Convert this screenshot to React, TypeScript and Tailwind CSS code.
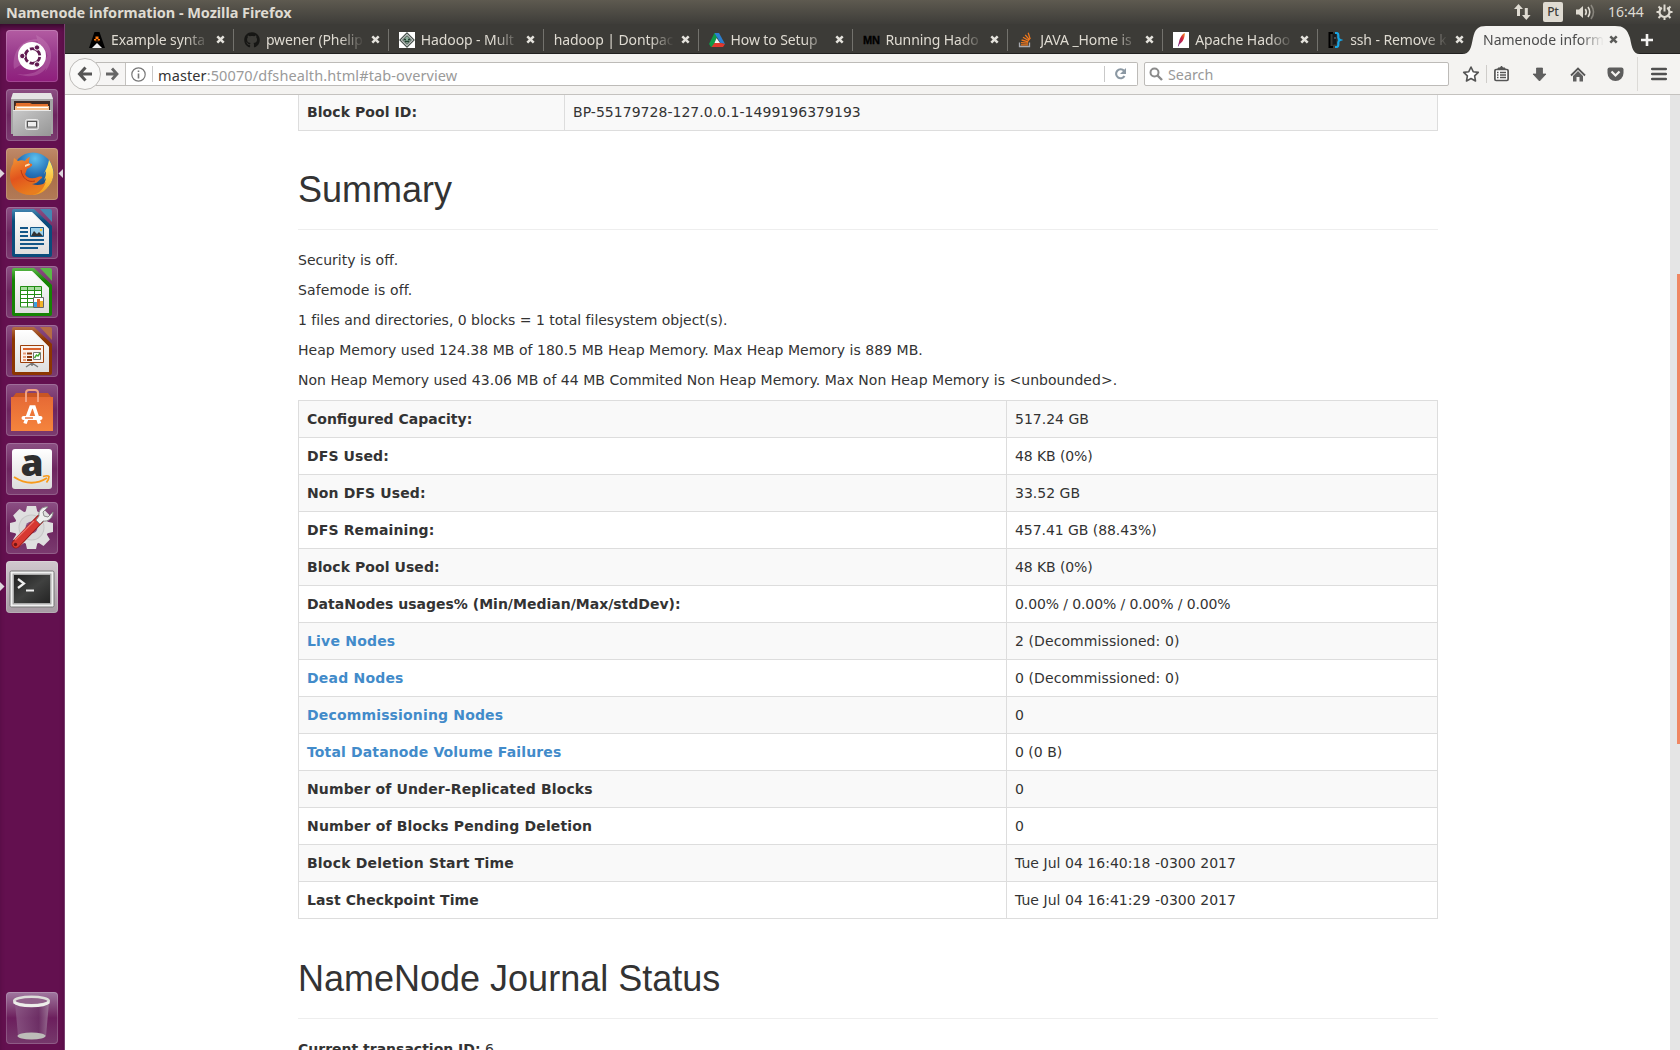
import React from "react";
import { FaGithub } from "react-icons/fa";

type Tab = { title: string; icon: React.ReactNode | null };

const AskIcon = () => (
  <svg width="16" height="16" viewBox="0 0 16 16">
    <path d="M5.500 0h5L16 16h-3.500L8 11.500 3.500 16H0z" fill="#000" />
    <path d="M6.500 4.500h3v2.500h1.500v2.500h-6V7h1.500z" fill="#ff7a10" />
    <path d="M5 8.500h1.700V10H5zM9.300 8.500H11V10H9.300zM7.300 7h1.400v3H7.300z" fill="#000" />
    <path d="M8 11l5 5H3z" fill="#eee" />
  </svg>
);

const HadoopIcon = () => (
  <svg width="16" height="16" viewBox="0 0 16 16">
    <path d="M0 0h16v16H0z" fill="#fff" />
    <path d="M8 1l7 7-7 7-7-7z" fill="none" stroke="#4b5550" strokeWidth="1.300" />
    <path d="M8 3.500L12.500 8 8 12.500 3.500 8z" fill="#8fae9c" stroke="#34433b" strokeWidth="1" />
    <path d="M5 7.500h2M9 7.500h2M6 9.500h4" stroke="#244233" strokeWidth="1.300" />
  </svg>
);

const DriveIcon = () => (
  <svg width="16" height="16" viewBox="0 0 16 16">
    <path d="M5.500 1h4L4.500 15H2L0 12z" fill="#0f9a48" />
    <path d="M5.500 1H10l6 11-4.500-1L7.500 4.500z" fill="#2b7fd0" />
    <path d="M5.500 11H12l4 1-2 3H2.500z" fill="#e0382d" />
    <path d="M7.600 6l3.400 5H5.500z" fill="#f2f2f2" />
  </svg>
);

const MnIcon = () => (
  <svg width="17" height="16" viewBox="0 0 17 16">
    <text x="0" y="12" fontFamily="Liberation Sans, sans-serif" fontWeight="700" fontSize="11" textLength="17" fill="#000" stroke="#000" strokeWidth=".3">MN</text>
  </svg>
);

const StackIcon = () => (
  <svg width="16" height="16" viewBox="0 0 16 16">
    <path d="M1.500 10.500v4h10v-4" fill="none" stroke="#a8aab0" strokeWidth="1.300" />
    <path d="M3 12.800h7M3 10.600l7 .5M3.600 8l6.700 1.800M5 5.300l6 3.400M7.200 2.800l4.400 5.200M10.200.8l2 6.300" fill="none" stroke="#f0781e" strokeWidth="1.300" />
  </svg>
);

const ApacheIcon = () => (
  <svg width="16" height="16" viewBox="0 0 16 16">
    <defs>
      <linearGradient id="feather" x1="1" y1="0" x2="0" y2="1">
        <stop offset="0" stopColor="#f59a23" />
        <stop offset=".4" stopColor="#d4203a" />
        <stop offset="1" stopColor="#6a2b8c" />
      </linearGradient>
    </defs>
    <path d="M0 0h16v16H0z" fill="#fff" />
    <path d="M11.800 1C9 2 6.800 6 6 10l-1.200 4.500.8-.2 1-2.300C9.500 10.500 12 6 11.800 1z" fill="url(#feather)" />
  </svg>
);

const AskUbuntuIcon = () => (
  <svg width="16" height="16" viewBox="0 0 16 16">
    <path d="M5 1H1.500v14H5" fill="none" stroke="#000" strokeWidth="2" />
    <path d="M4.500 1.500h4v11H6l-1.500 1z" fill="#15191c" />
    <path d="M7 1h1.300c1.500 0 2 .7 2 2v2.500c0 1.500.7 2 2 2.500-1.300.5-2 1-2 2.500V13c0 1.300-.5 2-2 2H7" fill="none" stroke="#17a4e4" strokeWidth="2.200" />
    <circle cx="7" cy="6" r=".7" fill="#9ab" />
  </svg>
);

const tabs: Tab[] = [
  { title: "Example synta", icon: <AskIcon /> },
  { title: "pwener (Phelip", icon: <FaGithub size={16} color="#161614" /> },
  { title: "Hadoop - Mult", icon: <HadoopIcon /> },
  { title: "hadoop | Dontpac", icon: null },
  { title: "How to Setup", icon: <DriveIcon /> },
  { title: "Running Hado", icon: <MnIcon /> },
  { title: "JAVA _Home is", icon: <StackIcon /> },
  { title: "Apache Hadoo", icon: <ApacheIcon /> },
  { title: "ssh - Remove k", icon: <AskUbuntuIcon /> },
];

const Close = ({ color }: { color: string }) => (
  <svg className="shrink-0" width="9" height="9" viewBox="0 0 9 9">
    <path d="M1.300 1.300l6.400 6.400m0-6.400l-6.400 6.400" stroke={color} strokeWidth="2.500" />
  </svg>
);

function TopPanel() {
  return (
    <div className="flex h-6 shrink-0 items-center justify-between bg-linear-to-b from-[#5e5a50] to-[#3e3d39] pl-[6px] pr-[7px] text-[#dfdbd2]">
      <div className="whitespace-nowrap text-[14.500px] leading-6 font-bold tracking-[-0.05px]">Namenode information - Mozilla Firefox</div>
      <div className="flex items-center">
        <svg width="18" height="18" viewBox="0 0 18 18" fill="#dfdbd2">
          <path d="M5.500 1L10 6H7v7H4V6H1zM13.300 17L9 12h2.800V5h3v7h2.800z" />
        </svg>
        <div className="ml-[12px] flex h-5 w-5 items-center justify-center rounded-[2px] bg-[#dfdbd2] text-[12px] font-medium tracking-[-0.2px] text-[#3e3d39]">Pt</div>
        <svg className="ml-[12px]" width="21" height="18" viewBox="0 0 21 18" fill="none" stroke="#dfdbd2" strokeWidth="1.600">
          <path d="M1 6.500h3L8 3v12l-4-3.500H1z" fill="#dfdbd2" stroke="none" />
          <path d="M10.300 6q2 3 0 6M13 4q3.500 5 0 10" />
          <path d="M16 2q5 7 0 14" opacity=".4" />
        </svg>
        <div className="ml-[12px] w-[37px] whitespace-nowrap text-[14px] leading-6">16:44</div>
        <svg className="ml-[11px]" width="17" height="18" viewBox="0 0 17 18" fill="none" stroke="#dfdbd2">
          <path d="M5.800 4.800a5 5 0 1 0 5.400 0" strokeWidth="2.200" />
          <path d="M8.500 1.500v7" strokeWidth="2" />
          <path d="M.5 9h2.500M14 9h2.500M2.500 3.500l2 2M14.500 3.500l-2 2M2.500 15l2-2M14.500 15l-2-2M8.500 14.500V17" strokeWidth="2" />
        </svg>
      </div>
    </div>
  );
}

const Tile = ({ children, bg = "bg-linear-to-b from-[#8c5084] via-[#6d255f] to-[#7b3b70]", left, right }: { children: React.ReactNode; bg?: string; left?: boolean; right?: boolean }) => (
  <div className="relative flex w-full justify-center">
    {left && <svg className="absolute top-[21px] left-0" width="5" height="9"><path d="M0 0l4.500 4.500L0 9z" fill="#ddd6dc" /></svg>}
    <div className={`mr-[1px] h-[52px] w-[52px] rounded-[4px] shadow-[inset_0_0_0_1px_rgba(255,255,255,0.18)] ${bg}`}>{children}</div>
    {right && <svg className="absolute top-[21px] right-[1px]" width="5" height="9"><path d="M5 0L.5 4.500 5 9z" fill="#ddd6dc" /></svg>}
  </div>
);

const DocIcon = ({ dark, light, id, children }: { dark: string; light: string; id: string; children: React.ReactNode }) => (
  <svg width="52" height="52" viewBox="0 0 52 52">
    <defs>
      <linearGradient id={id} x1="0" y1="0" x2="0" y2="1">
        <stop offset="0" stopColor={light} />
        <stop offset=".25" stopColor={dark} />
        <stop offset="1" stopColor={dark} />
      </linearGradient>
      <linearGradient id={id + "p"} x1="0" y1="0" x2="0" y2="1">
        <stop offset="0" stopColor="#fff" />
        <stop offset="1" stopColor="#dedede" />
      </linearGradient>
    </defs>
    <path d="M8 2h20l18 17v29q0 2-2 2H8q-2 0-2-2V4q0-2 2-2z" fill={`url(#${id})`} />
    <path d="M34 2h10q2 0 2 2v11z" fill={light} />
    <path d="M9 5h17l17 17v25H9z" fill={`url(#${id}p)`} />
    <path d="M26 5l17 17-6-2z" fill="#f4f4f4" />
    {children}
  </svg>
);

function Launcher() {
  return (
    <div className="flex w-[65px] shrink-0 flex-col border-r border-[#7b3f70] bg-[#63104f] pt-[6px] pb-[6px] shadow-[inset_0_5px_6px_-3px_#2c0824]">
      <div className="flex flex-col gap-[7px]">
        <Tile bg="bg-linear-to-b from-[#b35ca2] via-[#97388b] to-[#8f1d7c]">
          <svg width="52" height="52" viewBox="0 0 52 52" fill="none">
            <path d="M8 39C5 15 24 5 39 11 20 9 11 20 16 34M30 5c16 7 20 23 9 37 6-15 2-23-7-29M43 23c3 17-12 28-32 21 17 2 25-4 28-14" fill="#d69bc9" fillOpacity=".28" />
            <circle cx="26" cy="26" r="14" fill="#fff" />
            <circle cx="26.500" cy="26" r="7.300" stroke="#611a51" strokeWidth="2.800" strokeDasharray="13.300 2" strokeDashoffset="-1" />
            <g fill="#611a51" stroke="#fff" strokeWidth="1"><circle cx="16.300" cy="26" r="2.700" /><circle cx="31" cy="17.500" r="2.700" /><circle cx="31" cy="34.500" r="2.700" /></g>
          </svg>
        </Tile>
        <Tile>
          <svg width="52" height="52" viewBox="0 0 52 52">
            <defs><linearGradient id="cab" x1="0" y1="0" x2="1" y2="1"><stop offset="0" stopColor="#c9c9c9" /><stop offset="1" stopColor="#969696" /></linearGradient></defs>
            <path d="M7 4h38l2 6v35H5V10z" fill="#a5a5a5" />
            <path d="M7 4h38l2 6H5z" fill="#e4e4e4" />
            <path d="M8 12h36v11H8z" fill="#3b2a25" />
            <path d="M10 14h14l2 1h16v8H9z" fill="#e2702c" />
            <path d="M9 17h34v5H9z" fill="#f7c08a" /><path d="M11 18h31v1H11z" fill="#fff" />
            <path d="M7 21h38v26H7z" fill="url(#cab)" /><path d="M7 21h38v1H7z" fill="#e9e9e9" />
            <rect x="19.500" y="30.500" width="13" height="10" rx="2" fill="#bbb" stroke="#eaeaea" />
            <rect x="21.500" y="32.500" width="9" height="5.500" fill="#eee" stroke="#555" />
          </svg>
        </Tile>
        <Tile bg="bg-linear-to-b from-[#c08a69] via-[#aa6d47] to-[#b27a57]" left right>
          <svg width="52" height="52" viewBox="0 0 52 52">
            <defs>
              <radialGradient id="globe" cx=".55" cy=".15" r=".85"><stop offset="0" stopColor="#5cc0ee" /><stop offset=".45" stopColor="#2672b8" /><stop offset="1" stopColor="#10305f" /></radialGradient>
              <linearGradient id="fox" x1="0" y1="0" x2=".4" y2="1"><stop offset="0" stopColor="#f39a35" /><stop offset=".55" stopColor="#e2541d" /><stop offset="1" stopColor="#e87d1e" /></linearGradient>
              <linearGradient id="tail" x1="0" y1="0" x2="0" y2="1"><stop offset="0" stopColor="#ffef70" /><stop offset="1" stopColor="#f49a1a" /></linearGradient>
            </defs>
            <circle cx="27" cy="25" r="20.500" fill="url(#globe)" />
            <path d="M43 12c5 8 6 16 2 23-5 8-11 12-19 12 8-5 13-10 14-17l-2 2c2-4 2-6 2-9l-2 3c2-5 4-8 5-14z" fill="url(#tail)" />
            <path d="M8 10l4 3c2-1 5-1 7 0 2-3 4-4 5-4-1 2-1 4-1 6l3 1c1 2-2 3-5 5-1 2-1 4-2 5 2 5 8 5 13 3 3-1 5 0 4 1-3 2-5 6-10 6 5 2 11 1 14-2-3 8-8 13-15 13C12 47 4 39 4 28c0-5 1-9 3-12z" fill="url(#fox)" />
            <path d="M19 17q5-3 5 0l-5 2z" fill="#ffe1b3" />
            <path d="M15 22c1 8 7 13 14 11" fill="none" stroke="#b53814" strokeWidth="1" />
          </svg>
        </Tile>
        <Tile>
          <DocIcon id="writer" dark="#0a4c7c" light="#4587b2">
            <path d="M14 21h8M14 25h8M14 29h8M14 33h24M14 37h24M14 41h18" stroke="#145788" strokeWidth="2" />
            <path d="M24.500 20.500h13v9h-13z" fill="#9ed1ea" stroke="#145788" /><path d="M25 29l3-5 3 3 2-2 4 4z" fill="#333" /><circle cx="35" cy="23" r="1.200" fill="#f8c73b" />
          </DocIcon>
        </Tile>
        <Tile>
          <DocIcon id="calc" dark="#168305" light="#5bb848">
            <path d="M14 20.500h22v21H14z" fill="#fff" /><path d="M14 20.500h22v4H14z" fill="#a9dda0" />
            <path d="M14.500 20.500h21v20.500h-21zM14 24.500h22M14 28.500h22M14 32.500h22M14 36.500h22M21.500 20v21M28.500 20v21" fill="none" stroke="#238d14" />
            <path d="M27.500 31.500h10v10h-10z" fill="#fff" stroke="#666" /><path d="M28 36h3v5h-3z" fill="#3ba0df" /><path d="M31 33h3v8h-3z" fill="#df6727" /><path d="M34 35h3v6h-3z" fill="#f0b52a" />
          </DocIcon>
        </Tile>
        <Tile>
          <DocIcon id="impress" dark="#8c3602" light="#b56c45">
            <path d="M26 38l-6 4M26 38l6 4M26 38v3" stroke="#777" strokeWidth="1.500" />
            <path d="M14.500 20.500h23v17h-23z" fill="#faf2ec" stroke="#9c400b" /><path d="M17 24h18" stroke="#d9622b" strokeWidth="2" />
            <path d="M17 28.500h3M17 32h3M17 35h3" stroke="#e79d78" strokeWidth="2" /><path d="M21 28.500h5M21 32h5M21 35h5" stroke="#87370a" strokeWidth="2" />
            <path d="M27.500 27.500h7v7h-7z" fill="#fff" stroke="#777" /><path d="M28.500 33l2-3 1.500 1 2-3" stroke="#42a72d" strokeWidth="1.400" fill="none" />
          </DocIcon>
        </Tile>
        <Tile>
          <svg width="52" height="52" viewBox="0 0 52 52">
            <defs><linearGradient id="bag" x1="0" y1="0" x2="0" y2="1"><stop offset="0" stopColor="#e66a35" /><stop offset="1" stopColor="#f5843d" /></linearGradient></defs>
            <path d="M7 13l3-4h32l3 4z" fill="#c85523" /><path d="M5 13h42v34H5z" fill="url(#bag)" />
            <path d="M20 18V9q0-3 3-3h6q3 0 3 3v9" fill="none" stroke="#f2a181" strokeWidth="2" />
            <path d="M19 39.500L25 23h3l5.500 16.500" fill="none" stroke="#fff" strokeWidth="3.500" /><path d="M17.500 34h17" stroke="#fff" strokeWidth="4" strokeLinecap="round" /><path d="M19 34h8" stroke="#e96f35" strokeWidth="1.400" />
          </svg>
        </Tile>
        <Tile>
          <svg className="overflow-visible" width="52" height="52" viewBox="0 0 52 52">
            <defs><linearGradient id="amz" x1="0" y1="0" x2="0" y2="1"><stop offset="0" stopColor="#fff" /><stop offset="1" stopColor="#dcdcdc" /></linearGradient></defs>
            <rect x="6" y="6" width="40" height="40" rx="3" fill="url(#amz)" />
            <text x="26" y="33" textAnchor="middle" fontFamily="Open Sans, sans-serif" fontWeight="800" fontSize="37" fill="#2e2e2e">a</text>
            <path d="M8 34q17 11 33 1" fill="none" stroke="#f79a1c" strokeWidth="2" /><path d="M37 33.500q5-1.500 6 0 0 3-2.500 6" fill="none" stroke="#f79a1c" strokeWidth="1.700" />
          </svg>
        </Tile>
        <Tile>
          <svg width="52" height="52" viewBox="0 0 52 52">
            <g transform="translate(25.500 25.500)" fill="#dfdfdf">
              <circle r="17" />
              {[0, 45, 90, 135].map((a) => <path key={a} transform={`rotate(${a})`} d="M-4.500-21.500h9L6-15v30l-1.500 6.500h-9L-6 15v-30z" />)}
              <circle r="13" fill="#c6c6c6" /><circle r="12" fill="#d9d9d9" /><circle r="6" fill="#8d5484" />
            </g>
            <path d="M10 42L34 17" stroke="#9a1717" strokeWidth="9" strokeLinecap="round" /><path d="M10 42L33 18" stroke="#d73931" strokeWidth="7" strokeLinecap="round" /><path d="M9 38L28 19" stroke="#ee746b" strokeWidth="1.200" />
            <circle cx="9.500" cy="42.500" r="1.700" fill="#701616" />
            <path d="M30 18l4 4 3-3c5 1 10-3 10-9l-5 5-4-1-1-4 5-5c-6-1-10 4-9 9z" fill="#efefef" stroke="#888" />
          </svg>
        </Tile>
        <Tile bg="bg-linear-to-b from-[#d1c8ce] to-[#a69ba3]" left>
          <svg width="52" height="52" viewBox="0 0 52 52">
            <defs><linearGradient id="term" x1="0" y1="0" x2="1" y2="1"><stop offset="0" stopColor="#202020" /><stop offset=".5" stopColor="#404140" /><stop offset="1" stopColor="#242424" /></linearGradient></defs>
            <rect x="4" y="10" width="44" height="36" rx="1.500" fill="#f1f1f1" stroke="#777" /><rect x="6.500" y="12.500" width="39" height="31" fill="#aaa" /><rect x="8" y="14" width="36" height="28" fill="url(#term)" />
            <path d="M12 18l6 4.500-6 4.500" fill="none" stroke="#eee" strokeWidth="2.200" /><path d="M20 29.500h8" stroke="#eee" strokeWidth="2" />
          </svg>
        </Tile>
      </div>
      <div className="mt-auto">
        <Tile bg="bg-linear-to-b from-[#a078a0] via-[#6c1e5d] to-[#76396c]">
          <svg width="52" height="52" viewBox="0 0 52 52">
            <defs><linearGradient id="bin" x1="0" y1="0" x2="1" y2="0"><stop offset="0" stopColor="#8e5d89" /><stop offset=".7" stopColor="#6c3266" /><stop offset="1" stopColor="#a483a0" /></linearGradient></defs>
            <path d="M9 10h34l-3 34q-14 6-28 0z" fill="url(#bin)" fillOpacity=".75" />
            <ellipse cx="25.500" cy="44" rx="14" ry="3.500" fill="#bdbdb9" />
            <ellipse cx="25.500" cy="9" rx="17.300" ry="4.300" fill="#91618b" stroke="#ddddda" strokeWidth="2.600" /><path d="M8 10c5 5 30 5 35 0" fill="none" stroke="#eeeeeb" strokeWidth="3" />
          </svg>
        </Tile>
      </div>
    </div>
  );
}

function TabStrip() {
  return (
    <div className="flex h-[30px] shrink-0 border-b border-[#21211f] bg-[#3c3b37] pl-[14px]">
      {tabs.map((t, i) => (
        <div key={i} className="flex w-[154.900px] shrink-0 items-center pt-[2px]">
          <div className="flex min-w-0 flex-1 items-center pl-[10px]">
            {t.icon && <div className="mr-[6px] h-4 w-4 shrink-0">{t.icon}</div>}
            <div className="min-w-0 flex-1 whitespace-nowrap text-[14px] leading-6 tracking-[-0.1px] text-[#dfdbd2] [mask-image:linear-gradient(to_right,black_calc(100%-24px),transparent)]">{t.title}</div>
          </div>
          <div className="ml-[7px] pr-[8px]"><Close color="#e4e2dc" /></div>
          <div className={i === 8 ? "h-[22px] w-px" : "h-[22px] w-px bg-[#73726d]"} />
        </div>
      ))}
      <div className="relative -ml-[11px] flex w-[177px] shrink-0 items-center pt-[2px] pl-[21px]">
        <svg className="absolute top-[2px] left-0" width="178" height="28" viewBox="0 0 178 28">
          <path d="M0 28C8 28 9 22 11 12 13 3 16 0 24 0H153C162 0 165 3 168 12 170 22 171 28 178 28z" fill="#f4f3f1" />
        </svg>
        <div className="relative w-[121px] whitespace-nowrap text-[14px] leading-6 text-[#4c4c4c] [mask-image:linear-gradient(to_right,black_calc(100%-24px),transparent)]">Namenode inform</div>
        <div className="relative ml-[5px]"><Close color="#5b5b59" /></div>
      </div>
      <svg className="mt-[9px] ml-[1px]" width="14" height="14" viewBox="0 0 14 14"><path d="M7 1v12M1 7h12" stroke="#f4f3f1" strokeWidth="2.600" /></svg>
    </div>
  );
}

function NavBar() {
  return (
    <div className="flex h-[41px] shrink-0 items-center border-b border-[#c4c2bf] bg-[#f4f3f1] pl-[4px]">
      <div className="z-10 flex h-8 w-8 shrink-0 items-center justify-center rounded-full border border-[#bdbbb8] bg-[#f9f9f8]">
        <svg width="16" height="16" viewBox="0 0 16 16" fill="none" stroke="#555" strokeWidth="3"><path d="M8.500 1.500L2.500 8l6 6.500M3 8h12" /></svg>
      </div>
      <div className="-ml-[5px] flex h-6 w-[1042px] items-center rounded-r-[2px] border border-l-0 border-[#bdbbb8] bg-white">
        <div className="flex h-full w-[30px] shrink-0 items-center justify-end border-r border-[#c4c2bf] bg-[#f6f5f4] pr-[6px]">
          <svg width="13" height="14" viewBox="0 0 13 14" fill="none" stroke="#666" strokeWidth="2.800"><path d="M6 1.500L11 7l-5 5.500M11 7H0" /></svg>
        </div>
        <svg className="ml-[5px] shrink-0" width="15" height="15" viewBox="0 0 15 15" fill="none" stroke="#777" strokeWidth="1.200"><circle cx="7.500" cy="7.500" r="6.700" /><path d="M7.500 6.500v5M7.500 3.500v1.600" strokeWidth="1.600" /></svg>
        <div className="ml-[6px] h-4 w-px bg-[#c9c9c9]" />
        <div className="ml-[5px] flex-1 pt-[1px] whitespace-nowrap text-[14.500px] leading-5 tracking-[0.11px] text-[#9a9a9a]"><span className="text-[#333]">master</span>:50070/dfshealth.html#tab-overview</div>
        <div className="h-4 w-px bg-[#c9c9c9]" />
        <svg className="mr-[10px] ml-[9px]" width="13" height="14" viewBox="0 0 13 14"><path d="M10 3.800A4.500 4.500 0 1 0 10.500 9" fill="none" stroke="#8b98a3" strokeWidth="2.100" /><path d="M12 1v6H6z" fill="#8b98a3" /></svg>
      </div>
      <div className="ml-[6px] flex h-6 w-[305px] items-center rounded-[2px] border border-[#bdbbb8] bg-white pl-[4px]">
        <svg width="14" height="14" viewBox="0 0 14 14" fill="none" stroke="#8b8b8b" strokeWidth="2"><circle cx="5.500" cy="5.500" r="4" /><path d="M8.500 8.500l4.500 4.500" strokeWidth="2.400" /></svg>
        <span className="ml-[5px] pt-[1px] text-[14.300px] leading-5 text-[#999]">Search</span>
      </div>
      <svg className="ml-[13px]" width="18" height="18" viewBox="0 0 18 18"><path d="M9 2l2.200 4.700 5.100.7-3.700 3.500.9 5.100L9 13.500 4.500 16l.9-5.100-3.700-3.500 5.100-.7z" fill="#fff" stroke="#555" strokeWidth="1.600" strokeLinejoin="round" /></svg>
      <div className="ml-[6px] h-[18px] w-px bg-[#cfcdca]" />
      <svg className="ml-[7px]" width="15" height="16" viewBox="0 0 15 16"><path d="M4 3V2h2l1-1.500h1L9 2h2v1" fill="#555" stroke="#555" /><rect x=".9" y="3.500" width="13.200" height="11" rx="1.200" fill="#fff" stroke="#555" strokeWidth="1.700" /><path d="M3 6.500h1.500M3 9h1.500M3 11.500h1.500M6 6.500h6M6 9h6M6 11.500h6" stroke="#555" strokeWidth="1.500" /></svg>
      <svg className="ml-[23px]" width="15" height="15" viewBox="0 0 15 15"><path d="M4.500 1h6v6H14l-6.500 7L1 7h3.500z" fill="#606060" stroke="#505050" strokeWidth=".7" /></svg>
      <svg className="ml-[23px]" width="16" height="15" viewBox="0 0 16 15"><path d="M1 8.500L8 1.500l7 7" fill="none" stroke="#555" strokeWidth="1.800" /><path d="M3 9l5-5 5 5v5.500H9.500V10h-3v4.500H3z" fill="#606060" /></svg>
      <svg className="ml-[21px]" width="17" height="15" viewBox="0 0 17 15"><path d="M2.500.5h12q2 0 2 2V6a8 8 0 0 1-16 0V2.500q0-2 2-2z" fill="#5d5d5d" /><path d="M4.500 4.500l4 4 4-4" fill="none" stroke="#f4f3f1" strokeWidth="2.200" /></svg>
      <div className="ml-[13px] h-[34px] w-px bg-[#dcdad7]" />
      <svg className="ml-[13px]" width="16" height="14" viewBox="0 0 16 14"><path d="M1.200 2h13.600M1.200 7h13.600M1.200 12h13.600" stroke="#505050" strokeWidth="2.600" strokeLinecap="round" /></svg>
    </div>
  );
}

type Row = { k: string; v: string; kc?: string; vc?: string };

const rows: Row[] = [
  { k: "Configured Capacity:", v: "517.24 GB" },
  { k: "DFS Used:", v: "48 KB (0%)", kc: "tracking-[0.1px]", vc: "tracking-[-0.1px]" },
  { k: "Non DFS Used:", v: "33.52 GB", kc: "tracking-[0.12px]" },
  { k: "DFS Remaining:", v: "457.41 GB (88.43%)", kc: "tracking-[0.13px]", vc: "tracking-[-0.06px]" },
  { k: "Block Pool Used:", v: "48 KB (0%)", kc: "tracking-[0.07px]", vc: "tracking-[-0.1px]" },
  { k: "DataNodes usages% (Min/Median/Max/stdDev):", v: "0.00% / 0.00% / 0.00% / 0.00%", vc: "tracking-[-0.11px]" },
  { k: "Live Nodes", v: "2 (Decommissioned: 0)", kc: "tracking-[0.2px] text-[#428bca]", vc: "tracking-[0.09px]" },
  { k: "Dead Nodes", v: "0 (Decommissioned: 0)", kc: "tracking-[0.2px] text-[#428bca]", vc: "tracking-[0.09px]" },
  { k: "Decommissioning Nodes", v: "0", kc: "tracking-[0.16px] text-[#428bca]" },
  { k: "Total Datanode Volume Failures", v: "0 (0 B)", kc: "tracking-[0.14px] text-[#428bca]" },
  { k: "Number of Under-Replicated Blocks", v: "0", kc: "tracking-[0.13px]" },
  { k: "Number of Blocks Pending Deletion", v: "0", kc: "tracking-[0.16px]" },
  { k: "Block Deletion Start Time", v: "Tue Jul 04 16:40:18 -0300 2017", kc: "tracking-[0.2px]", vc: "tracking-[0.03px]" },
  { k: "Last Checkpoint Time", v: "Tue Jul 04 16:41:29 -0300 2017", kc: "tracking-[0.09px]", vc: "tracking-[0.03px]" },
];

const Heading = ({ children, top }: { children: React.ReactNode; top: string }) => (
  <div className={`mb-5 h-[59px] border-b border-[#eee] ${top}`}>
    <h1 className="font-['Liberation_Sans',sans-serif] text-[36px] leading-[37.600px]">{children}</h1>
  </div>
);

function Page() {
  return (
    <div className="flex min-h-0 flex-1 overflow-hidden bg-white">
      <div className="flex-1 overflow-hidden pl-[233px] font-['DejaVu_Sans',sans-serif] text-[14px] leading-5 text-[#333]">
        <div className="w-[1140px]">
          <div className="flex h-9 border border-t-0 border-[#ddd] bg-[#f9f9f9]">
            <div className="w-[266px] border-r border-[#ddd] px-2 pt-[7px] font-bold tracking-[0.07px]">Block Pool ID:</div>
            <div className="px-2 pt-[7px] tracking-[0.03px]">BP-55179728-127.0.0.1-1499196379193</div>
          </div>
          <Heading top="mt-10">Summary</Heading>
          <div className="flex flex-col gap-[10px]">
            <p>Security is off.</p>
            <p className="tracking-[0.1px]">Safemode is off.</p>
            <p className="tracking-[-0.02px]">1 files and directories, 0 blocks = 1 total filesystem object(s).</p>
            <p className="tracking-[0.03px]">Heap Memory used 124.38 MB of 180.5 MB Heap Memory. Max Heap Memory is 889 MB.</p>
            <p className="tracking-[0.04px]">Non Heap Memory used 43.06 MB of 44 MB Commited Non Heap Memory. Max Non Heap Memory is &lt;unbounded&gt;.</p>
          </div>
          <table className="mt-[10px] w-full table-fixed border-collapse border border-[#ddd]">
            <colgroup><col className="w-[708px]" /><col /></colgroup>
            <tbody>
              {rows.map(({ k, v, kc = "", vc = "" }) => (
                <tr key={k} className="h-[37px] odd:bg-[#f9f9f9]">
                  <td className={`border border-[#ddd] px-2 py-[8px] font-bold ${kc}`}><span>{k}</span></td>
                  <td className={`border border-[#ddd] px-2 py-[8px] ${vc}`}>{v}</td>
                </tr>
              ))}
            </tbody>
          </table>
          <Heading top="mt-[41px]">NameNode Journal Status</Heading>
          <p><b>Current transaction ID:</b> 6</p>
        </div>
      </div>
      <div className="w-[10px] shrink-0 bg-[#e5e5e5] pt-[179px] pl-[7px]">
        <div className="h-[470px] bg-[#f08763]" />
      </div>
    </div>
  );
}

export default function App() {
  return (
    <div className="flex h-[1050px] w-[1680px] flex-col overflow-hidden bg-white font-['Noto_Sans','Open_Sans',sans-serif]">
      <TopPanel />
      <div className="flex min-h-0 flex-1">
        <Launcher />
        <div className="flex min-w-0 flex-1 flex-col">
          <TabStrip />
          <NavBar />
          <Page />
        </div>
      </div>
    </div>
  );
}
